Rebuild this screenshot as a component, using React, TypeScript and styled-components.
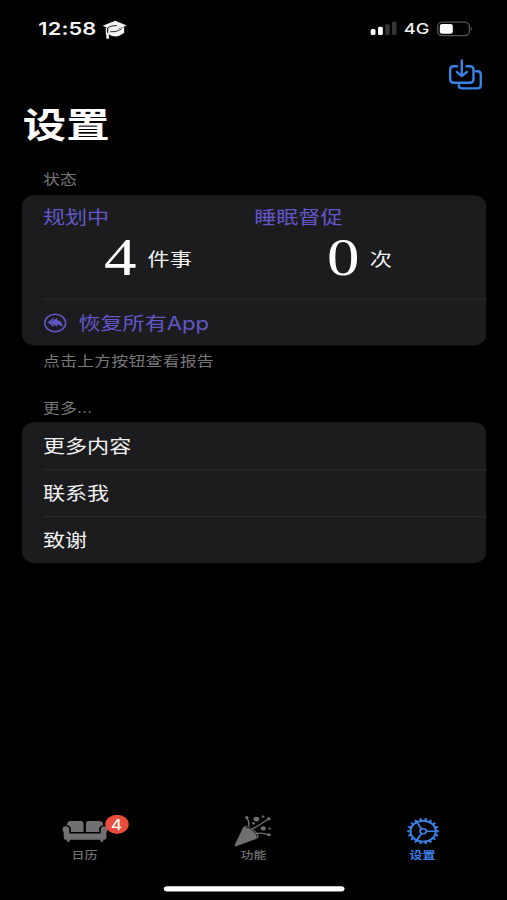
import React from "react";
import styled, { createGlobalStyle } from "styled-components";

const GlobalStyle = createGlobalStyle`
  html, body { margin: 0; padding: 0; background: #000; }
  body { width: 507px; height: 900px; overflow: hidden; }
  * { box-sizing: border-box; }
`;

const SX = 1.3;
const SY = 900 / 844;

const blue = "#3b82e8";
const violet = "#6257c9";
const gray = "#77777a";

/* A 390x844 phone layout stretched over the window. */
const Screen = styled.div`
  width: 390px;
  height: 844px;
  transform: scale(${SX}, ${SY});
  transform-origin: 0 0;
  display: flex;
  flex-direction: column;
  background: #000;
  color: #f2f2f2;
  font-family: Inter, "Noto Sans CJK SC", sans-serif;
  font-size: 17px;
  line-height: 22px;
  white-space: nowrap;
`;

const StatusBar = styled.header`
  height: 54px;
  padding: 0 26px 0 29.5px;
  display: flex;
  align-items: center;
  justify-content: space-between;
`;

const StatusGroup = styled.div<{ $gap: number }>`
  display: flex;
  align-items: center;
  gap: ${(p) => p.$gap}px;
`;

const Clock = styled.span`
  font-size: 16.8px;
  font-weight: 600;
  letter-spacing: 0.1px;
`;

const Network = styled.span`
  font-size: 14px;
  font-weight: 500;
`;

const Toolbar = styled.div`
  height: 33px;
  padding-right: 18.6px;
  display: flex;
  align-items: center;
  justify-content: flex-end;
`;

const Title = styled.h1`
  margin: 0;
  height: 58px;
  padding: 1px 0 0 17.5px;
  font-size: 33.4px;
  font-weight: 700;
  line-height: 58px;
  color: #fff;
`;

const Caption = styled.div<{ $top: number; $bottom?: number }>`
  padding: ${(p) => p.$top}px 0 ${(p) => p.$bottom ?? 0}px 33px;
  font-size: 13px;
  letter-spacing: 0.15px;
  line-height: 18px;
  color: ${gray};
`;

const Card = styled.section`
  width: 357px;
  margin-left: 17px;
  border-radius: 10px;
  background: #1c1c1e;
  overflow: hidden;
`;

const Row = styled.div<{ $divided?: boolean; $accent?: boolean }>`
  height: 44px;
  margin-left: 16px;
  padding: ${(p) => (p.$accent ? "0 0 0 0.6px" : p.$divided ? "1px 0 0" : "2px 0 0")};
  display: flex;
  align-items: center;
  gap: 9.8px;
  border-top: ${(p) => (p.$divided ? "1px solid #2c2c2f" : "0")};
  color: ${(p) => (p.$accent ? violet : "#f2f2f2")};
`;

const Stats = styled.div`
  height: 97px;
  padding: 10px 16px 0;
  display: grid;
  grid-template-columns: 1fr 1fr;
`;

const Stat = styled.div`
  display: flex;
  flex-direction: column;
`;

const StatLabel = styled.div`
  height: 22px;
  color: ${violet};
`;

const StatValue = styled.div<{ $indent: number; $gap: number }>`
  height: 55px;
  padding-left: ${(p) => p.$indent}px;
  display: flex;
  align-items: center;
  gap: ${(p) => p.$gap}px;
`;

const Digit = styled.span`
  font-family: "Liberation Serif", serif;
  font-size: 50px;
  line-height: 52px;
  padding-bottom: 3px;
  color: #fff;
`;

const TabBar = styled.nav`
  margin-top: auto;
  height: 66.5px;
  display: grid;
  grid-template-columns: repeat(3, 1fr);
`;

const Tab = styled.div<{ $active?: boolean }>`
  position: relative;
  display: flex;
  flex-direction: column;
  align-items: center;
  font-size: 10px;
  font-weight: ${(p) => (p.$active ? 700 : 500)};
  line-height: 14px;
  color: ${(p) => (p.$active ? blue : "#707073")};
`;

const TabIcon = styled.div`
  height: 34px;
  padding-top: 3px;
  display: flex;
  align-items: center;
`;

const Badge = styled.span`
  position: absolute;
  top: 3.5px;
  left: 80.7px;
  width: 18px;
  height: 18px;
  border-radius: 50%;
  background: #eb4d3d;
  color: #fff;
  font-size: 13px;
  font-weight: 500;
  line-height: 18px;
  text-align: center;
`;

const HomeArea = styled.footer`
  height: 17px;
  display: flex;
  justify-content: center;
`;

const HomeBar = styled.div`
  width: 139px;
  height: 5.5px;
  margin-top: 3.6px;
  border-radius: 3px;
  background: #fff;
`;

/* Icons are drawn in window pixels, then sized back to layout units. */
const Glyph = ({
  box,
  children,
}: {
  box: [number, number, number, number];
  children: React.ReactNode;
}) => (
  <svg
    width={box[2] / SX}
    height={box[3] / SY}
    viewBox={box.join(" ")}
    preserveAspectRatio="none"
    fill="none"
    display="block"
    overflow="visible"
  >
    {children}
  </svg>
);

const GradCap = () => (
  <Glyph box={[103, 20, 24, 18]}>
    <path d="M103 25.5 115.5 20.5 127 25.3 114 30.5Z" fill="#f4f4f4" />
    <path d="M108.5 27.5 114 30 124.5 26.8V32.5Q119 37 114.5 36 110 35.5 108.5 33Z" fill="#f4f4f4" />
    <path d="M117 25.3Q110 25.5 107.8 28V33.5" stroke="#000" strokeWidth=".9" />
    <path d="M110.5 31.5Q116.5 32.5 122 28.6" stroke="#000" strokeWidth=".8" />
    <path d="M106.7 27.5V33" stroke="#f4f4f4" strokeWidth="1.3" />
    <path d="M106.2 32.5H109L109.3 38.5H106.8Z" fill="#f4f4f4" />
  </Glyph>
);

const Signal = () => (
  <Glyph box={[370.5, 21.5, 26, 14]}>
    <rect x="370.7" y="29.3" width="4.8" height="6" rx="1.5" fill="#fff" />
    <rect x="378" y="27" width="4.8" height="8.3" rx="1.5" fill="#fff" />
    <rect x="385.2" y="24.3" width="4.5" height="11" rx="1.3" fill="#343434" />
    <rect x="392" y="21.8" width="4.5" height="13.5" rx="1.3" fill="#343434" />
  </Glyph>
);

const Battery = () => (
  <Glyph box={[437, 21, 36, 15]}>
    <rect x="437.8" y="21.7" width="31.8" height="13.6" rx="4.5" stroke="#565656" strokeWidth="1.3" />
    <rect x="440" y="23.6" width="13" height="9.8" rx="2.5" fill="#fff" />
    <path d="M471 26.3Q473.6 28.5 471 30.8Z" fill="#565656" />
  </Glyph>
);

const ImportStack = () => (
  <Glyph box={[449, 60, 34, 30]}>
    <g stroke={blue} strokeWidth="2.4" strokeLinecap="round" strokeLinejoin="round">
      <path d="M457.5 66.6H454Q450.7 66.6 450.7 70V79.5Q450.7 83 454.2 83H470.5Q474 83 474 79.5V70Q474 66.6 470.5 66.6H467" />
      <path d="M462.3 60.8V76M457.3 72.2 462.3 76.4 467.5 72.2" />
      <path d="M476.3 71.5H478Q481.3 71.5 481.3 75V85.3Q481.3 88.7 478 88.7H462.7Q459.3 88.7 459.3 85.5" />
    </g>
  </Glyph>
);

const ReplyAll = () => (
  <Glyph box={[44, 313, 22, 19]}>
    <ellipse cx="55" cy="322.5" rx="10.4" ry="8.7" stroke={violet} strokeWidth="1.5" />
    <path d="M47.3 321.8 53.5 317.2V319.2L50.4 321.8 53.5 324.6V326.6Z" fill={violet} />
    <path d="M50.6 321.8 57 317.2V319.8Q62 320.3 62.8 326.7 60.5 324.2 57 324.1V326.6Z" fill={violet} />
  </Glyph>
);

const Sofa = () => (
  <Glyph box={[62.5, 819, 45, 24]}>
    <g fill="#707073">
      <path d="M67 825Q67 821 71 821H81Q83.7 821 83.7 824V832H71V829Q71 826 67 825Z" />
      <path d="M86 824Q86 821 89 821H99Q103.3 821 103.3 825 99.3 826 99.3 829V832H86Z" />
      <path d="M62.7 829Q63 826.2 66 826.3 69.4 826.5 69.4 830V833.5H100.8V830Q101 826.5 104 826.3 107.3 826.3 107.5 829.5 107.4 831 106.5 832.5V838Q106.5 839.8 104.5 839.8H103.3V841.8H100.5V839.8H69.8V841.8H67V839.8Q63.8 839.8 63.8 838V832.5Q62.6 831 62.7 829Z" />
    </g>
  </Glyph>
);

const Popper = () => (
  <Glyph box={[235, 815, 38, 32]}>
    <g fill="#707073" stroke="#707073">
      <path d="M235.8 845.5 244.5 827.5Q247 825 252.5 828.8 259 833 259.5 836.5 259.6 838 257.5 838.8L237.5 846.3Q235.5 846.7 235.8 845.5Z" strokeWidth=".5" />
      <path d="M246.8 828Q250 826.7 254.5 831.5 258.5 835 257.8 837" stroke="#000" strokeWidth=".9" fill="none" />
      <g fill="none" strokeWidth="1.3">
        <path d="M249.8 827Q250.5 822 247.8 818" />
        <path d="M252.5 829.5Q260 826 269 819.5" />
        <path d="M256.5 834Q263 832.5 269.5 835" />
      </g>
      <g stroke="none">
        <ellipse cx="247.8" cy="817.8" rx="1.7" ry="1.5" />
        <ellipse cx="257.3" cy="819.4" rx="2.9" ry="2.3" />
        <ellipse cx="264.2" cy="817" rx="1.3" ry="1.1" />
        <ellipse cx="269.8" cy="819" rx="1.8" ry="1.5" />
        <ellipse cx="254.5" cy="823.5" rx="1.4" ry="1.2" />
        <ellipse cx="264.3" cy="828.7" rx="2.6" ry="2.2" />
        <ellipse cx="270.5" cy="828.8" rx="1.3" ry="1.1" />
        <ellipse cx="270" cy="835" rx="1.8" ry="1.5" />
      </g>
    </g>
  </Glyph>
);

const teeth = Array.from({ length: 18 }, (_, i) => i * 20);

const Gear = () => (
  <svg width="25" height="25" viewBox="-12.5 -12.5 25 25" fill="none" stroke={blue} display="block">
    <circle r="9.7" strokeWidth="1.6" />
    <circle r="2.4" strokeWidth="1.4" />
    {teeth.map((a) => (
      <path key={a} d="M-.75 -10H.75L.45 -12H-.45Z" fill={blue} strokeWidth=".7" transform={`rotate(${a + 10})`} />
    ))}
    {[90, 210, 330].map((a) => (
      <path key={a} d="M0 -2.6V-9.5" strokeWidth="1.5" transform={`rotate(${a})`} />
    ))}
  </svg>
);

export default function App() {
  return (
    <>
      <GlobalStyle />
      <Screen>
        <StatusBar>
          <StatusGroup $gap={5}>
            <Clock>12:58</Clock>
            <GradCap />
          </StatusGroup>
          <StatusGroup $gap={6}>
            <Signal />
            <Network>4G</Network>
            <Battery />
          </StatusGroup>
        </StatusBar>
        <Toolbar>
          <ImportStack />
        </Toolbar>
        <Title>设置</Title>

        <Caption $top={14} $bottom={6}>状态</Caption>
        <Card>
          <Stats>
            <Stat>
              <StatLabel>规划中</StatLabel>
              <StatValue $indent={47} $gap={8.5}>
                <Digit>4</Digit>
                <span>件事</span>
              </StatValue>
            </Stat>
            <Stat>
              <StatLabel>睡眠督促</StatLabel>
              <StatValue $indent={56} $gap={8}>
                <Digit>0</Digit>
                <span>次</span>
              </StatValue>
            </Stat>
          </Stats>
          <Row $divided $accent>
            <ReplyAll />
            <span>恢复所有App</span>
          </Row>
        </Card>
        <Caption $top={5}>点击上方按钮查看报告</Caption>

        <Caption $top={26} $bottom={5}>更多...</Caption>
        <Card>
          <Row>更多内容</Row>
          <Row $divided>联系我</Row>
          <Row $divided>致谢</Row>
        </Card>

        <TabBar>
          <Tab>
            <TabIcon><Sofa /></TabIcon>
            日历
            <Badge>4</Badge>
          </Tab>
          <Tab>
            <TabIcon><Popper /></TabIcon>
            功能
          </Tab>
          <Tab $active>
            <TabIcon><Gear /></TabIcon>
            设置
          </Tab>
        </TabBar>
        <HomeArea>
          <HomeBar />
        </HomeArea>
      </Screen>
    </>
  );
}
